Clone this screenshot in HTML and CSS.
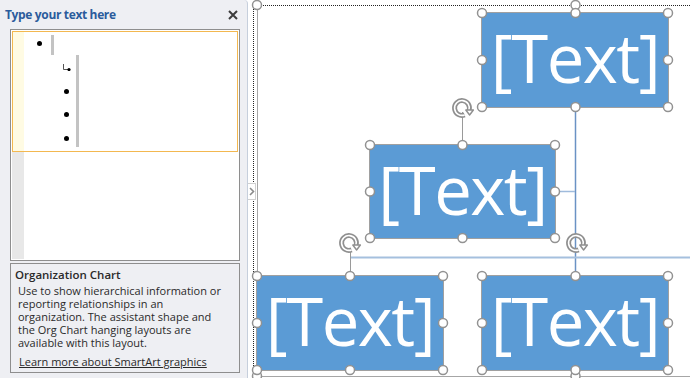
FILE: index.html
```html
<!DOCTYPE html>
<html lang="en">
<head>
    <meta charset="UTF-8">
    <title>SmartArt - Organization Chart</title>
    <link rel="stylesheet" href="styles.css">
</head>
<body>
<div class="app">
    <aside class="pane">
        <div class="pane-head">
            <span class="pane-title">Type your text here</span>
            <svg class="pane-close" width="10" height="10" viewBox="0 0 10 10">
                <path d="M1 1 L9 9 M9 1 L1 9" stroke="#3c3c3c" stroke-width="2"/>
            </svg>
        </div>

        <div class="text-area">
            <div class="outline">
                <div class="gutter"></div>
                <div class="lines">
                    <div class="row-top">
                        <span class="dot"></span>
                        <span class="caret short"></span>
                    </div>
                    <div class="group">
                        <div class="markers">
                            <div class="mark">
                                <svg width="8" height="7" viewBox="0 0 8 7">
                                    <path d="M0.5 0 V5.5 H5" stroke="#555" stroke-width="1" fill="none"/>
                                    <circle cx="6" cy="5.5" r="1.6" fill="#000"/>
                                </svg>
                            </div>
                            <div class="mark"><span class="dot"></span></div>
                            <div class="mark"><span class="dot"></span></div>
                            <div class="mark"><span class="dot"></span></div>
                        </div>
                        <span class="caret tall"></span>
                    </div>
                </div>
            </div>
            <div class="rest">
                <div class="gutter grey"></div>
            </div>
        </div>

        <div class="about">
            <h3>Organization Chart</h3>
            <p>Use to show hierarchical information or reporting relationships in an organization. The assistant shape and the Org Chart hanging layouts are available with this layout.</p>
            <a href="#">Learn more about SmartArt graphics</a>
        </div>
    </aside>

    <main class="canvas">
        <svg class="layer" width="442" height="378" viewBox="0 0 442 378">
            <!-- selection frame -->
            <line x1="5.5" y1="5" x2="5.5" y2="378" stroke="#222" stroke-dasharray="1 1"/>
            <line x1="5" y1="5.5" x2="442" y2="5.5" stroke="#222" stroke-dasharray="1 1"/>
            <line x1="9.5" y1="6" x2="9.5" y2="378" stroke="#a6a6a6"/>
            <line x1="9" y1="376.5" x2="442" y2="376.5" stroke="#a6a6a6"/>
            <!-- connectors -->
            <line x1="327.5" y1="107" x2="327.5" y2="276" stroke="#6a92c4" stroke-width="1.5"/>
            <line x1="307" y1="191.5" x2="327" y2="191.5" stroke="#9fbbdc" stroke-width="1.5"/>
            <line x1="102" y1="257.5" x2="442" y2="257.5" stroke="#a5c0de" stroke-width="2"/>
            <!-- rotate stems -->
            <line x1="327.5" y1="5" x2="327.5" y2="13" stroke="#9a9a9a"/>
            <line x1="214.5" y1="112" x2="214.5" y2="145" stroke="#9a9a9a"/>
            <line x1="102.5" y1="248" x2="102.5" y2="276" stroke="#9a9a9a"/>
        </svg>

        <div class="node node-a">[Text]</div>
        <div class="node node-b">[Text]</div>
        <div class="node node-c">[Text]</div>
        <div class="node node-d">[Text]</div>

        <svg class="layer" width="442" height="378" viewBox="0 0 442 378">
            <defs>
                <g id="rot">
                    <path d="M2.6 6.9 A7.4 7.4 0 1 1 6.9 2.6" fill="none" stroke="#8f8f8f" stroke-width="5"/>
                    <path d="M2.6 6.9 A7.4 7.4 0 1 1 6.9 2.6" fill="none" stroke="#fff" stroke-width="1.6"/>
                    <path d="M3.8 2 L11.4 2 L7.6 7 Z" fill="#fff" stroke="#8f8f8f" stroke-width="1.4" stroke-linejoin="round"/>
                </g>
                <circle id="h" r="4.5" fill="#fff" stroke="#929292" stroke-width="1.5"/>
            </defs>
            <use href="#rot" x="214" y="108"/>
            <use href="#rot" x="101" y="243"/>
            <use href="#rot" x="328" y="243"/>

            <!-- frame handles -->
            <use href="#h" x="9" y="5"/>
            <use href="#h" x="327.5" y="5"/>
            <use href="#h" x="9" y="376"/>
            <use href="#h" x="327.5" y="376"/>

            <!-- node a -->
            <use href="#h" x="234" y="13"/><use href="#h" x="327.5" y="13"/><use href="#h" x="420" y="13"/>
            <use href="#h" x="234" y="60"/><use href="#h" x="420" y="60"/>
            <use href="#h" x="234" y="107"/><use href="#h" x="327.5" y="107"/><use href="#h" x="420" y="107"/>
            <!-- node b -->
            <use href="#h" x="122" y="145"/><use href="#h" x="214.5" y="145"/><use href="#h" x="307" y="145"/>
            <use href="#h" x="122" y="191.5"/><use href="#h" x="307" y="191.5"/>
            <use href="#h" x="122" y="238"/><use href="#h" x="214.5" y="238"/><use href="#h" x="307" y="238"/>
            <!-- node c -->
            <use href="#h" x="9" y="276"/><use href="#h" x="102" y="276"/><use href="#h" x="195" y="276"/>
            <use href="#h" x="9" y="323"/><use href="#h" x="195" y="323"/>
            <use href="#h" x="9" y="370"/><use href="#h" x="102" y="370"/><use href="#h" x="195" y="370"/>
            <!-- node d -->
            <use href="#h" x="234" y="276"/><use href="#h" x="327.5" y="276"/><use href="#h" x="420" y="276"/>
            <use href="#h" x="234" y="323"/><use href="#h" x="420" y="323"/>
            <use href="#h" x="234" y="370"/><use href="#h" x="327.5" y="370"/><use href="#h" x="420" y="370"/>
        </svg>

        <div class="expand">
            <svg width="6" height="9" viewBox="0 0 6 9">
                <path d="M1 1 L4.5 4.5 L1 8" fill="none" stroke="#8a8a8a" stroke-width="1.6"/>
            </svg>
        </div>
    </main>
</div>
</body>
</html>
```

FILE: styles.css
```css
* {
    margin: 0;
    padding: 0;
    box-sizing: border-box;
}

body {
    font-family: "Open Sans", "Noto Sans", sans-serif;
    background-color: #fff;
    width: 690px;
    height: 378px;
    overflow: hidden;
}

.app {
    display: flex;
    height: 378px;
}

/* Text pane on the left */
.pane {
    width: 248px;
    flex-shrink: 0;
    background-color: #eeeff3;
    border-right: 1px solid #c6cfdc;
    border-top-right-radius: 4px;
    display: flex;
    flex-direction: column;
}

.pane-head {
    height: 29px;
    display: flex;
    align-items: center;
    justify-content: space-between;
    padding: 0 9px 0 5px;
}

.pane-title {
    font-size: 12px;
    font-weight: 700;
    color: #2b5c9c;
    letter-spacing: -0.35px;
}

.text-area {
    margin: 0 7px 0 10px;
    height: 232px;
    border: 1px solid #8e8e8e;
    background-color: #fff;
    padding: 1px;
    display: flex;
    flex-direction: column;
}

.outline {
    height: 121px;
    border: 1px solid #f3b850;
    display: flex;
}

.gutter {
    width: 11px;
    background-color: #fffbe3;
}

.gutter.grey {
    width: 12px;
    background-color: #e8e8e8;
}

.rest {
    flex: 1;
    display: flex;
}

.lines {
    flex: 1;
    padding-top: 2px;
}

.row-top {
    display: flex;
    align-items: flex-start;
    padding-left: 13px;
    margin-top: 1px;
}

.dot {
    width: 5px;
    height: 5px;
    border-radius: 50%;
    background-color: #000;
    display: block;
}

.row-top .dot {
    margin-top: 6px;
}

.caret {
    width: 3px;
    background-color: #c3c3c3;
    display: block;
}

.caret.short {
    height: 20px;
    margin-left: 9px;
}

.group {
    display: flex;
    padding-left: 38px;
}

.markers {
    width: 9px;
    padding-top: 1px;
}

.mark {
    height: 23.5px;
    display: flex;
    align-items: center;
    justify-content: center;
}

.mark svg {
    margin-left: 1px;
}

.caret.tall {
    margin-left: 5px;
    margin-bottom: 3px;
}

/* Layout description */
.about {
    margin: 2px 7px 0 10px;
    height: 110px;
    border: 1px solid #8e8e8e;
    padding: 3px 14px 0 4px;
    color: #2a2a2a;
}

.about h3 {
    font-size: 11.5px;
    font-weight: 600;
    line-height: 16px;
}

.about p {
    font-size: 11px;
    line-height: 13px;
    padding-left: 3px;
    margin-top: 1px;
}

.about a {
    display: inline-block;
    font-size: 11px;
    line-height: 13px;
    color: #2a2a2a;
    margin: 3px 0 0 4px;
}

/* Diagram canvas */
.canvas {
    position: relative;
    flex: 1;
    overflow: hidden;
}

.layer {
    position: absolute;
    left: 0;
    top: 0;
}

.node {
    position: absolute;
    background-color: #5b9bd5;
    outline: 1px solid #a0a0a0;
    color: #fff;
    font-size: 67px;
    letter-spacing: -1.5px;
    line-height: 1;
    display: flex;
    align-items: center;
    justify-content: center;
    padding-bottom: 5px;
}

.node-a { left: 234px; top: 13px; width: 186px; height: 94px; }
.node-b { left: 122px; top: 145px; width: 185px; height: 93px; }
.node-c { left: 9px; top: 276px; width: 186px; height: 94px; }
.node-d { left: 234px; top: 276px; width: 186px; height: 94px; }

.expand {
    position: absolute;
    left: -1px;
    top: 183px;
    width: 9px;
    height: 17px;
    background-color: #fff;
    border: 1px solid #d0d0d0;
    display: flex;
    align-items: center;
    justify-content: center;
}
```
